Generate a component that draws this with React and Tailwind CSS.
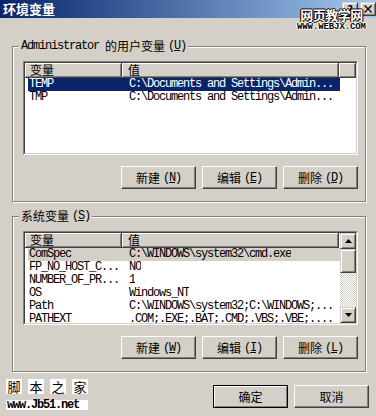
import React from "react";

const MONO = "font-['Liberation_Mono','Noto_Sans_CJK_SC',monospace] text-[12px] tracking-[-1.2px]";

function Btn({ label, acc, def }) {
  const inner = (
    <span className="flex items-center whitespace-nowrap text-[12px] leading-[14px] text-black">
      {label}
      {acc ? (
        <span className={"ml-[3px] " + MONO}>
          (<u>{acc}</u>)
        </span>
      ) : null}
    </span>
  );
  if (def) {
    return (
      <div className="w-[75px] h-[23px] border border-black">
        <div className="w-full h-full flex items-center justify-center border border-t-white border-l-white border-r-[#808080] border-b-[#808080]">
          {inner}
        </div>
      </div>
    );
  }
  return (
    <div className="w-[75px] h-[23px] flex items-center justify-center bg-[#d4d0c8] border border-t-white border-l-white border-r-[#404040] border-b-[#404040] shadow-[inset_-1px_-1px_0_#808080]">
      {inner}
    </div>
  );
}

function HeadCell({ children, className }) {
  return (
    <div
      className={
        "h-[15px] flex items-center bg-[#d4d0c8] border-r border-b border-[#404040] shadow-[inset_1px_1px_0_#fff,inset_-1px_-1px_0_#808080] text-[12px] leading-[12px] " +
        className
      }
    >
      {children}
    </div>
  );
}

function Row({ a, b, sel }) {
  const bg = sel === "focus" ? "bg-[#0a246a] text-white" : sel === "gray" ? "bg-[#d4d0c8] text-black" : "text-black";
  return (
    <div className={"ml-[3px] w-[312px] h-[13px] shrink-0 flex items-center whitespace-pre " + bg + " " + MONO}>
      <div className="w-[95px] pl-[1px] leading-[13px] overflow-hidden">{a}</div>
      <div className="pl-[6px] leading-[13px] overflow-hidden">{b}</div>
    </div>
  );
}

function Arrow({ up }) {
  return (
    <svg width="7" height="4" viewBox="0 0 7 4">
      {up ? <path d="M3.5 0 L7 4 L0 4 Z" fill="#000" /> : <path d="M0 0 L7 0 L3.5 4 Z" fill="#000" />}
    </svg>
  );
}

function Raised({ className, children }) {
  return (
    <div
      className={
        "flex items-center justify-center bg-[#d4d0c8] border border-t-[#d4d0c8] border-l-[#d4d0c8] border-r-[#404040] border-b-[#404040] shadow-[inset_1px_1px_0_#fff,inset_-1px_-1px_0_#808080] " +
        className
      }
    >
      {children}
    </div>
  );
}

function ListView({ rows, scroll }) {
  return (
    <div className="w-[335px] h-[94px] border border-t-[#808080] border-l-[#808080] border-r-white border-b-white">
      <div className="w-full h-full border border-t-[#404040] border-l-[#404040] border-r-[#d4d0c8] border-b-[#d4d0c8] bg-white flex">
        <div className="flex-1 min-w-0 flex flex-col">
          <div className="flex shrink-0">
            <HeadCell className="w-[97px] pl-[5px]">变量</HeadCell>
            <HeadCell className="w-[217px] pl-[6px]">值</HeadCell>
            {scroll ? null : <HeadCell className="flex-1" />}
          </div>
          <div className="flex-1 min-h-0 flex flex-col overflow-hidden">
            {rows.map((r, i) => (
              <Row key={i} a={r[0]} b={r[1]} sel={r[2]} />
            ))}
          </div>
        </div>
        {scroll ? (
          <div className="w-[16px] flex flex-col">
            <Raised className="h-[16px]">
              <Arrow up />
            </Raised>
            <Raised className="h-[24px]" />
            <div className="flex-1 bg-[repeating-conic-gradient(#d4d0c8_0%_25%,#ffffff_0%_50%)] bg-[length:2px_2px]" />
            <Raised className="h-[16px]">
              <Arrow />
            </Raised>
          </div>
        ) : null}
      </div>
    </div>
  );
}

function Group({ legend, rows, scroll, buttons, className }) {
  return (
    <div
      className={
        "relative ml-[12px] w-[354px] h-[156px] border border-[#808080] shadow-[inset_1px_1px_0_#fff,1px_1px_0_#fff] pl-[10px] pt-[14px] " +
        className
      }
    >
      <div className="absolute left-[6px] top-[-8px] bg-[#d4d0c8] px-[2px] flex items-center whitespace-pre text-[12px] leading-[14px] text-black">
        {legend}
      </div>
      <ListView rows={rows} scroll={scroll} />
      <div className="w-[335px] mt-[11px] flex justify-end gap-[6px]">
        {buttons.map((b, i) => (
          <Btn key={i} label={b[0]} acc={b[1]} />
        ))}
      </div>
    </div>
  );
}

export default function App() {
  return (
    <div className="relative w-[376px] h-[416px] overflow-hidden bg-[#d4d0c8] font-['Noto_Sans_CJK_SC',sans-serif] text-black">
      {/* title bar */}
      <div className="h-[18px] flex items-center bg-linear-to-r from-[#0a246a] to-[#a6caf0]">
        <span className="ml-[3px] text-white font-bold text-[13px] leading-[16px]">环境变量</span>
        <div className="ml-auto flex gap-[2px]">
          <Raised className="w-[16px] h-[14px] text-[11px] font-bold leading-none">?</Raised>
          <Raised className="w-[16px] h-[14px] text-[12px] font-bold leading-none">×</Raised>
        </div>
      </div>

      <Group
        className="mt-[28px]"
        legend={
          <>
            <span className={MONO}>Administrator </span>
            <span>的用户变量</span>
            <span className={"ml-[3px] " + MONO}>
              (<u>U</u>)
            </span>
          </>
        }
        rows={[
          ["TEMP", "C:\\Documents and Settings\\Admin...", "focus"],
          ["TMP", "C:\\Documents and Settings\\Admin...", ""],
        ]}
        buttons={[
          ["新建", "N"],
          ["编辑", "E"],
          ["删除", "D"],
        ]}
      />

      <Group
        className="mt-[14px]"
        scroll
        legend={
          <>
            <span>系统变量</span>
            <span className={"ml-[3px] " + MONO}>
              (<u>S</u>)
            </span>
          </>
        }
        rows={[
          ["ComSpec", "C:\\WINDOWS\\system32\\cmd.exe", "gray"],
          ["FP_NO_HOST_C...", "NO", ""],
          ["NUMBER_OF_PR...", "1", ""],
          ["OS", "Windows_NT", ""],
          ["Path", "C:\\WINDOWS\\system32;C:\\WINDOWS;...", ""],
          ["PATHEXT", ".COM;.EXE;.BAT;.CMD;.VBS;.VBE;....", ""],
        ]}
        buttons={[
          ["新建", "W"],
          ["编辑", "I"],
          ["删除", "L"],
        ]}
      />

      {/* bottom row */}
      <div className="flex items-start mt-[7px]">
        <div className="ml-[6px] flex flex-col">
          <div className="flex gap-[6px]">
            {["脚", "本", "之", "家"].map((c) => (
              <span key={c} className="w-[16px] h-[15px] bg-white flex items-center justify-center text-[13px] leading-none">
                {c}
              </span>
            ))}
          </div>
          <div className={"mt-[6px] bg-white px-[1px] leading-[10px] h-[10px] font-bold " + MONO}>www.Jb51.net</div>
        </div>
        <div className="ml-auto mr-[7px] mt-[6px] flex gap-[6px]">
          <Btn label="确定" def />
          <Btn label="取消" />
        </div>
      </div>

      {/* watermark over title bar */}
      <div className="absolute left-[297px] top-[7px] flex flex-col items-center">
        <span className="text-white text-[13px] leading-[15px] font-bold tracking-[-0.5px] [text-shadow:1px_0_0_#000,-1px_0_0_#000,0_1px_0_#000,0_-1px_0_#000]">
          网页教学网
        </span>
        <span className="mt-[1px] font-['Liberation_Mono',monospace] font-bold text-[9px] leading-[9px] tracking-[-0.1px] text-black [text-shadow:1px_0_0_#fff,-1px_0_0_#fff,0_1px_0_#fff,0_-1px_0_#fff]">
          WWW.WEBJX.COM
        </span>
      </div>
    </div>
  );
}
